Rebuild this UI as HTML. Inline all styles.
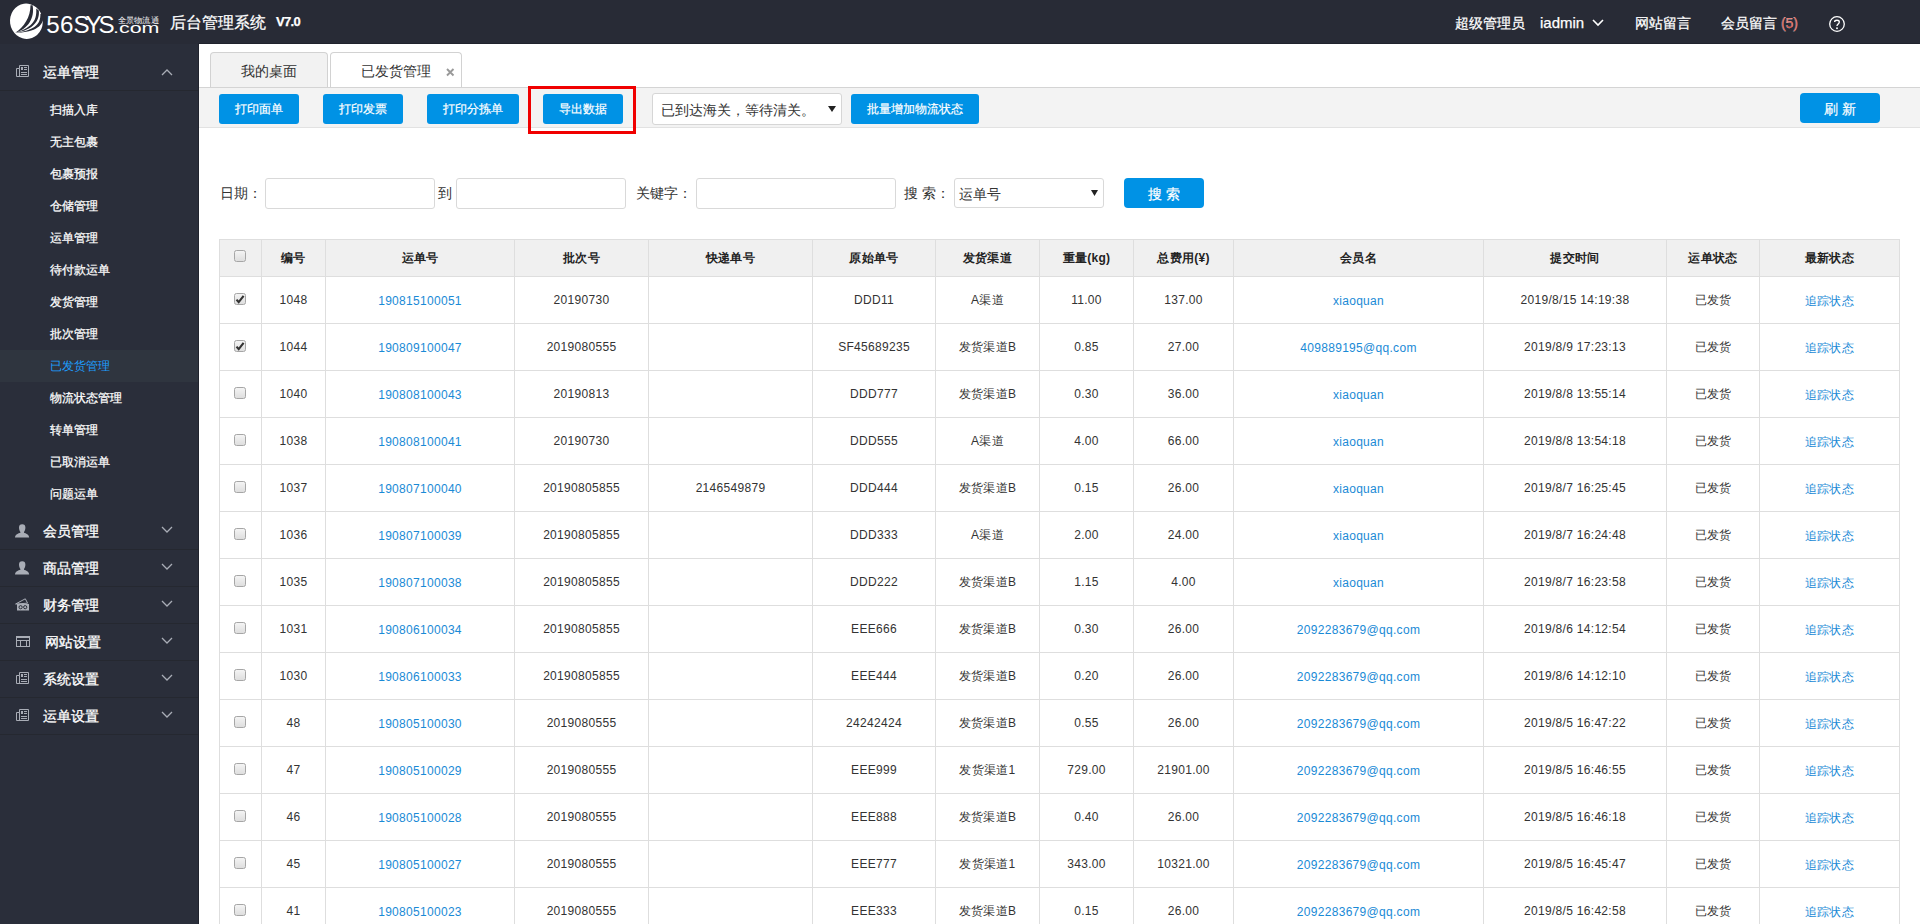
<!DOCTYPE html>
<html><head><meta charset="utf-8">
<style>
*{box-sizing:border-box;margin:0;padding:0}
html,body{width:1920px;height:924px;overflow:hidden;background:#fff;font-family:"Liberation Sans",sans-serif;color:#333;font-weight:500}
.abs{position:absolute}
#hd{position:absolute;left:0;top:0;width:1920px;height:44px;background:#282b36}
#hdline{position:absolute;left:198px;top:43px;width:1722px;height:1px;background:#20232d}
#side{position:absolute;left:0;top:44px;width:199px;height:880px;background:#2a2e3a;border-right:1px solid #20232d}
.t{position:absolute;white-space:nowrap;line-height:1}
.w{color:#fff;-webkit-text-stroke:0.25px #fff}
.sec{position:absolute;left:0;width:198px;height:37px;border-bottom:1px solid #252830}
.sec .lbl{position:absolute;left:43px;top:11px;font-size:14px;color:#fff;line-height:14px;-webkit-text-stroke:0.3px #fff}
.sec svg.ic{position:absolute;left:15px;top:11px}
.sec svg.ch{position:absolute;left:161px;top:13px}
.sub{position:absolute;left:0;width:198px;height:32px}
.sub span{position:absolute;left:50px;top:10px;font-size:12px;line-height:12px;color:#fff;-webkit-text-stroke:0.25px currentColor}
.sub.on{background:#2f353f}
.sub.on span{color:#1e9fff;-webkit-text-stroke:0}
.btn{position:absolute;height:30px;top:94px;background:#0092e5;border-radius:3px;color:#fff;font-size:12px;line-height:30px;text-align:center;-webkit-text-stroke:0.2px #fff}
.inp{position:absolute;top:178px;height:31px;border:1px solid #d9d9d9;border-radius:3px;background:#fff}
.lab{position:absolute;top:186px;font-size:14px;line-height:14px;color:#333}
#tbl{position:absolute;left:219px;top:239px;border-collapse:collapse;table-layout:fixed;width:1681px}
#tbl th,#tbl td{border:1px solid #dedede;text-align:center;font-size:12px;color:#333;padding:0;white-space:nowrap;overflow:hidden;letter-spacing:0.3px}
#tbl th{background:#f0f0f0;height:37px;font-weight:bold;color:#222}
#tbl td{height:47px;font-weight:400}
#tbl a{color:#1a8ad6;position:relative;top:1px}
#tbl th .cb{top:-2px;left:-1px}
.cb{display:block;margin:0 auto;width:12px;height:12px;border:1px solid #a6a6a6;border-radius:2.5px;background:linear-gradient(#f4f4f4,#dedede);position:relative;top:-1px;left:-1px}
.cb svg{position:absolute;left:-1px;top:-1px}
</style></head><body>
<div id="hd">
  <!-- logo -->
  <svg class="abs" style="left:0;top:0;font-weight:normal" width="170" height="44" viewBox="0 0 170 44">
    <ellipse cx="26.4" cy="21.3" rx="16.4" ry="17.7" transform="rotate(-8 26.4 21.3)" fill="#fff"/>
    <path d="M30.5 5.2 C 30.5 17, 24 27, 15.2 32.8 C 28 29, 35 18, 32.6 5.2 Z" fill="#282b36"/>
    <path d="M36.2 8.6 C 37 19, 34 27, 15.8 32.8 C 34 30, 40 20, 38.8 10.6 Z" fill="#282b36"/>
    <path d="M40.4 14 C 40.5 23, 37 29.5, 16.4 32.9 C 36 32, 44 26, 44 14 Z" fill="#282b36"/>
    <text x="46.2 60.1 73.4 85.4 98.6" y="32.8" font-family="Liberation Sans" font-size="24.2" fill="#fff">56SYS</text>
    <text x="113" y="32.8" font-family="Liberation Sans" font-size="14.6" fill="#fff" textLength="46.5" lengthAdjust="spacingAndGlyphs">.com</text>
    <text x="117.8" y="23" font-family="Liberation Sans" font-size="8" fill="#fff" textLength="41" lengthAdjust="spacingAndGlyphs">全景物流通</text>
  </svg>
  <div class="t w" style="left:170px;top:15px;font-size:16px;line-height:16px">后台管理系统</div>
  <div class="t w" style="left:276px;top:15px;font-size:13px;line-height:13px;font-weight:bold;letter-spacing:-0.7px">V7.0</div>

  <div class="t w" style="left:1455px;top:16px;font-size:14px;line-height:14px">超级管理员</div>
  <div class="t w" style="left:1540px;top:15px;font-size:15px;line-height:15px">iadmin</div>
  <svg class="abs" style="left:1592px;top:19px" width="12" height="8" viewBox="0 0 12 8"><path d="M1 1 L6 6 L11 1" stroke="#fff" stroke-width="1.6" fill="none"/></svg>
  <div class="t w" style="left:1635px;top:16px;font-size:14px;line-height:14px">网站留言</div>
  <div class="t w" style="left:1721px;top:16px;font-size:14px;line-height:14px">会员留言 <span style="color:#e0463c">(5)</span></div>
  <svg class="abs" style="left:1828px;top:15px" width="18" height="18" viewBox="0 0 18 18"><circle cx="9" cy="9" r="7.3" stroke="#fff" stroke-width="1.3" fill="none"/><path d="M6.6 7 C6.6 4.6 11.3 4.6 11.3 7 C11.3 8.8 9 9 9 11" stroke="#fff" stroke-width="1.35" fill="none"/><circle cx="9" cy="13.3" r="0.95" fill="#fff"/></svg>
</div>
<div id="hdline"></div>

<div id="side">
<div class="sec" style="top:10px"><svg class="ic" width="15" height="13" viewBox="0 0 15 13" style="left:15px;top:11px"><path d="M4.5 0.5 H13.5 V11.5 H1.5 V3.5 H4.5 Z M4.5 3.5 V11.5" stroke="#a9adb6" stroke-width="1" fill="none"/><rect x="6" y="2" width="2" height="3" fill="#a9adb6"/><path d="M9 2.5 H12 M9 4.5 H12 M6 7.5 H12 M6 9.5 H12" stroke="#a9adb6" stroke-width="1"/></svg><span class="lbl">运单管理</span><svg class="ch" style="top:15px" width="12" height="8" viewBox="0 0 12 8"><path d="M1 6 L6 1 L11 6" stroke="#a9adb6" stroke-width="1.3" fill="none"/></svg></div><div class="sub" style="top:50px"><span>扫描入库</span></div><div class="sub" style="top:82px"><span>无主包裹</span></div><div class="sub" style="top:114px"><span>包裹预报</span></div><div class="sub" style="top:146px"><span>仓储管理</span></div><div class="sub" style="top:178px"><span>运单管理</span></div><div class="sub" style="top:210px"><span>待付款运单</span></div><div class="sub" style="top:242px"><span>发货管理</span></div><div class="sub" style="top:274px"><span>批次管理</span></div><div class="sub on" style="top:306px"><span>已发货管理</span></div><div class="sub" style="top:338px"><span>物流状态管理</span></div><div class="sub" style="top:370px"><span>转单管理</span></div><div class="sub" style="top:402px"><span>已取消运单</span></div><div class="sub" style="top:434px"><span>问题运单</span></div><div class="sec" style="top:469px"><svg class="ic" width="15" height="14" viewBox="0 0 15 14" style="left:15px;top:10.6px"><path d="M7.2 0.2 C5 0.2 4 1.4 4 3.6 C4 5.6 4.8 7.2 5.4 8 V8.8 C3.4 9.4 0.2 10.4 0 13.6 H14.2 C14 10.4 10.8 9.4 9 8.8 V8 C9.6 7.2 10.4 5.6 10.4 3.6 C10.4 1.4 9.4 0.2 7.2 0.2 Z" fill="#a9adb6"/></svg><span class="lbl">会员管理</span><svg class="ch" width="12" height="8" viewBox="0 0 12 8"><path d="M1 1 L6 6 L11 1" stroke="#a9adb6" stroke-width="1.3" fill="none"/></svg></div><div class="sec" style="top:506px"><svg class="ic" width="15" height="14" viewBox="0 0 15 14" style="left:15px;top:10.6px"><path d="M7.2 0.2 C5 0.2 4 1.4 4 3.6 C4 5.6 4.8 7.2 5.4 8 V8.8 C3.4 9.4 0.2 10.4 0 13.6 H14.2 C14 10.4 10.8 9.4 9 8.8 V8 C9.6 7.2 10.4 5.6 10.4 3.6 C10.4 1.4 9.4 0.2 7.2 0.2 Z" fill="#a9adb6"/></svg><span class="lbl">商品管理</span><svg class="ch" width="12" height="8" viewBox="0 0 12 8"><path d="M1 1 L6 6 L11 1" stroke="#a9adb6" stroke-width="1.3" fill="none"/></svg></div><div class="sec" style="top:543px"><svg class="ic" width="15" height="14" viewBox="0 0 15 14" style="left:15px;top:10.5px"><path d="M0.6 6 L10.3 0.8 L12.6 5.2 Z" stroke="#a9adb6" stroke-width="1" fill="none"/><rect x="2" y="6" width="12" height="6.5" fill="#a9adb6"/><circle cx="5.6" cy="9.2" r="1.6" stroke="#2b2f3a" stroke-width="1" fill="none"/><circle cx="10.2" cy="9.2" r="1.6" stroke="#2b2f3a" stroke-width="1" fill="none"/></svg><span class="lbl">财务管理</span><svg class="ch" width="12" height="8" viewBox="0 0 12 8"><path d="M1 1 L6 6 L11 1" stroke="#a9adb6" stroke-width="1.3" fill="none"/></svg></div><div class="sec" style="top:580px"><svg class="ic" width="15" height="12" viewBox="0 0 15 12" style="left:16px;top:12px"><rect x="0.5" y="0.5" width="13" height="10" stroke="#a9adb6" stroke-width="1" fill="none"/><rect x="0" y="0" width="14" height="2" fill="#a9adb6"/><path d="M1 4.5 H13 M4.5 4.5 V10.5 M10.5 4.5 V10.5" stroke="#a9adb6" stroke-width="1"/></svg><span class="lbl" style="left:45px">网站设置</span><svg class="ch" width="12" height="8" viewBox="0 0 12 8"><path d="M1 1 L6 6 L11 1" stroke="#a9adb6" stroke-width="1.3" fill="none"/></svg></div><div class="sec" style="top:617px"><svg class="ic" width="15" height="13" viewBox="0 0 15 13" style="left:15px;top:11px"><path d="M4.5 0.5 H13.5 V11.5 H1.5 V3.5 H4.5 Z M4.5 3.5 V11.5" stroke="#a9adb6" stroke-width="1" fill="none"/><rect x="6" y="2" width="2" height="3" fill="#a9adb6"/><path d="M9 2.5 H12 M9 4.5 H12 M6 7.5 H12 M6 9.5 H12" stroke="#a9adb6" stroke-width="1"/></svg><span class="lbl">系统设置</span><svg class="ch" width="12" height="8" viewBox="0 0 12 8"><path d="M1 1 L6 6 L11 1" stroke="#a9adb6" stroke-width="1.3" fill="none"/></svg></div><div class="sec" style="top:654px"><svg class="ic" width="15" height="13" viewBox="0 0 15 13" style="left:15px;top:11px"><path d="M4.5 0.5 H13.5 V11.5 H1.5 V3.5 H4.5 Z M4.5 3.5 V11.5" stroke="#a9adb6" stroke-width="1" fill="none"/><rect x="6" y="2" width="2" height="3" fill="#a9adb6"/><path d="M9 2.5 H12 M9 4.5 H12 M6 7.5 H12 M6 9.5 H12" stroke="#a9adb6" stroke-width="1"/></svg><span class="lbl">运单设置</span><svg class="ch" width="12" height="8" viewBox="0 0 12 8"><path d="M1 1 L6 6 L11 1" stroke="#a9adb6" stroke-width="1.3" fill="none"/></svg></div>
</div>

<!-- tabs -->
<div class="abs" style="left:210px;top:52px;width:118px;height:36px;background:#f2f2f2;border:1px solid #d2d2d2;border-bottom:none;border-radius:4px 4px 0 0"></div>
<div class="t" style="left:241px;top:64px;font-size:14px;line-height:14px;color:#333">我的桌面</div>
<div class="abs" style="left:330px;top:52px;width:132px;height:36px;background:#fff;border:1px solid #d2d2d2;border-bottom:none;border-radius:4px 4px 0 0"></div>
<div class="t" style="left:361px;top:64px;font-size:14px;line-height:14px;color:#333">已发货管理</div>
<svg class="abs" style="left:445.5px;top:67.5px" width="9" height="9" viewBox="0 0 9 9"><path d="M1 1 L7.5 7.5 M7.5 1 L1 7.5" stroke="#999" stroke-width="1.9"/></svg>

<!-- toolbar -->
<div class="abs" style="left:199px;top:87px;width:1721px;height:41px;background:#f3f3f3;border-top:1px solid #d4d4d4;border-bottom:1px solid #e2e2e2"></div>
<div class="btn" style="left:219px;width:80px">打印面单</div>
<div class="btn" style="left:323px;width:80px">打印发票</div>
<div class="btn" style="left:427px;width:92px">打印分拣单</div>
<div class="btn" style="left:543px;width:80px">导出数据</div>
<div class="abs" style="left:528px;top:86px;width:108px;height:48px;border:3px solid #f00000"></div>
<div class="abs" style="left:652px;top:93px;width:190px;height:32px;background:#fff;border:1px solid #d6d6d6;border-radius:3px"></div>
<div class="t" style="left:661px;top:103px;font-size:14px;line-height:14px;color:#333">已到达海关，等待清关。</div>
<svg class="abs" style="left:828px;top:106px" width="8" height="6" viewBox="0 0 8 6"><path d="M0 0 H8 L4 6 Z" fill="#222"/></svg>
<div class="btn" style="left:851px;width:128px">批量增加物流状态</div>
<div class="btn" style="left:1800px;top:93px;width:80px;font-size:14px;letter-spacing:4px;text-indent:4px;line-height:33px;border-radius:4px">刷新</div>

<!-- search row -->
<div class="lab" style="left:220px">日期：</div>
<div class="inp" style="left:265px;width:170px"></div>
<div class="lab" style="left:438px">到</div>
<div class="inp" style="left:456px;width:170px"></div>
<div class="lab" style="left:636px">关键字：</div>
<div class="inp" style="left:696px;width:200px"></div>
<div class="lab" style="left:904px;letter-spacing:0">搜 索：</div>
<div class="inp" style="left:954px;width:150px;height:30px"></div>
<div class="t" style="left:959px;top:187px;font-size:14px;line-height:14px;color:#333">运单号</div>
<svg class="abs" style="left:1090.5px;top:189.5px" width="7" height="6" viewBox="0 0 7 6"><path d="M0 0 H7 L3.5 6 Z" fill="#222"/></svg>
<div class="btn" style="left:1124px;top:178px;width:80px;font-size:14px;letter-spacing:4px;text-indent:4px;line-height:32px;border-radius:4px">搜索</div>

<table id="tbl"><colgroup><col style="width:42px"><col style="width:64px"><col style="width:189px"><col style="width:134px"><col style="width:164px"><col style="width:123px"><col style="width:104px"><col style="width:94px"><col style="width:100px"><col style="width:250px"><col style="width:183px"><col style="width:93px"><col style="width:140px"></colgroup>
<thead><tr class="h"><th><span class="cb"></span></th><th>编号</th><th>运单号</th><th>批次号</th><th>快递单号</th><th>原始单号</th><th>发货渠道</th><th>重量(kg)</th><th>总费用(¥)</th><th>会员名</th><th>提交时间</th><th>运单状态</th><th>最新状态</th></tr></thead>
<tbody><tr><td><span class="cb"><svg width="12" height="12" viewBox="0 0 12 12"><path d="M2.5 6.6 L4.7 9.2 L9.6 2.8" stroke="#333" stroke-width="2.1" fill="none"/></svg></span></td><td>1048</td><td><a>190815100051</a></td><td>20190730</td><td></td><td>DDD11</td><td>A渠道</td><td>11.00</td><td>137.00</td><td><a>xiaoquan</a></td><td>2019/8/15 14:19:38</td><td>已发货</td><td><a>追踪状态</a></td></tr><tr><td><span class="cb"><svg width="12" height="12" viewBox="0 0 12 12"><path d="M2.5 6.6 L4.7 9.2 L9.6 2.8" stroke="#333" stroke-width="2.1" fill="none"/></svg></span></td><td>1044</td><td><a>190809100047</a></td><td>2019080555</td><td></td><td>SF45689235</td><td>发货渠道B</td><td>0.85</td><td>27.00</td><td><a>409889195@qq.com</a></td><td>2019/8/9 17:23:13</td><td>已发货</td><td><a>追踪状态</a></td></tr><tr><td><span class="cb"></span></td><td>1040</td><td><a>190808100043</a></td><td>20190813</td><td></td><td>DDD777</td><td>发货渠道B</td><td>0.30</td><td>36.00</td><td><a>xiaoquan</a></td><td>2019/8/8 13:55:14</td><td>已发货</td><td><a>追踪状态</a></td></tr><tr><td><span class="cb"></span></td><td>1038</td><td><a>190808100041</a></td><td>20190730</td><td></td><td>DDD555</td><td>A渠道</td><td>4.00</td><td>66.00</td><td><a>xiaoquan</a></td><td>2019/8/8 13:54:18</td><td>已发货</td><td><a>追踪状态</a></td></tr><tr><td><span class="cb"></span></td><td>1037</td><td><a>190807100040</a></td><td>20190805855</td><td>2146549879</td><td>DDD444</td><td>发货渠道B</td><td>0.15</td><td>26.00</td><td><a>xiaoquan</a></td><td>2019/8/7 16:25:45</td><td>已发货</td><td><a>追踪状态</a></td></tr><tr><td><span class="cb"></span></td><td>1036</td><td><a>190807100039</a></td><td>20190805855</td><td></td><td>DDD333</td><td>A渠道</td><td>2.00</td><td>24.00</td><td><a>xiaoquan</a></td><td>2019/8/7 16:24:48</td><td>已发货</td><td><a>追踪状态</a></td></tr><tr><td><span class="cb"></span></td><td>1035</td><td><a>190807100038</a></td><td>20190805855</td><td></td><td>DDD222</td><td>发货渠道B</td><td>1.15</td><td>4.00</td><td><a>xiaoquan</a></td><td>2019/8/7 16:23:58</td><td>已发货</td><td><a>追踪状态</a></td></tr><tr><td><span class="cb"></span></td><td>1031</td><td><a>190806100034</a></td><td>20190805855</td><td></td><td>EEE666</td><td>发货渠道B</td><td>0.30</td><td>26.00</td><td><a>2092283679@qq.com</a></td><td>2019/8/6 14:12:54</td><td>已发货</td><td><a>追踪状态</a></td></tr><tr><td><span class="cb"></span></td><td>1030</td><td><a>190806100033</a></td><td>20190805855</td><td></td><td>EEE444</td><td>发货渠道B</td><td>0.20</td><td>26.00</td><td><a>2092283679@qq.com</a></td><td>2019/8/6 14:12:10</td><td>已发货</td><td><a>追踪状态</a></td></tr><tr><td><span class="cb"></span></td><td>48</td><td><a>190805100030</a></td><td>2019080555</td><td></td><td>24242424</td><td>发货渠道B</td><td>0.55</td><td>26.00</td><td><a>2092283679@qq.com</a></td><td>2019/8/5 16:47:22</td><td>已发货</td><td><a>追踪状态</a></td></tr><tr><td><span class="cb"></span></td><td>47</td><td><a>190805100029</a></td><td>2019080555</td><td></td><td>EEE999</td><td>发货渠道1</td><td>729.00</td><td>21901.00</td><td><a>2092283679@qq.com</a></td><td>2019/8/5 16:46:55</td><td>已发货</td><td><a>追踪状态</a></td></tr><tr><td><span class="cb"></span></td><td>46</td><td><a>190805100028</a></td><td>2019080555</td><td></td><td>EEE888</td><td>发货渠道B</td><td>0.40</td><td>26.00</td><td><a>2092283679@qq.com</a></td><td>2019/8/5 16:46:18</td><td>已发货</td><td><a>追踪状态</a></td></tr><tr><td><span class="cb"></span></td><td>45</td><td><a>190805100027</a></td><td>2019080555</td><td></td><td>EEE777</td><td>发货渠道1</td><td>343.00</td><td>10321.00</td><td><a>2092283679@qq.com</a></td><td>2019/8/5 16:45:47</td><td>已发货</td><td><a>追踪状态</a></td></tr><tr><td><span class="cb"></span></td><td>41</td><td><a>190805100023</a></td><td>2019080555</td><td></td><td>EEE333</td><td>发货渠道B</td><td>0.15</td><td>26.00</td><td><a>2092283679@qq.com</a></td><td>2019/8/5 16:42:58</td><td>已发货</td><td><a>追踪状态</a></td></tr></tbody></table>
</body></html>
